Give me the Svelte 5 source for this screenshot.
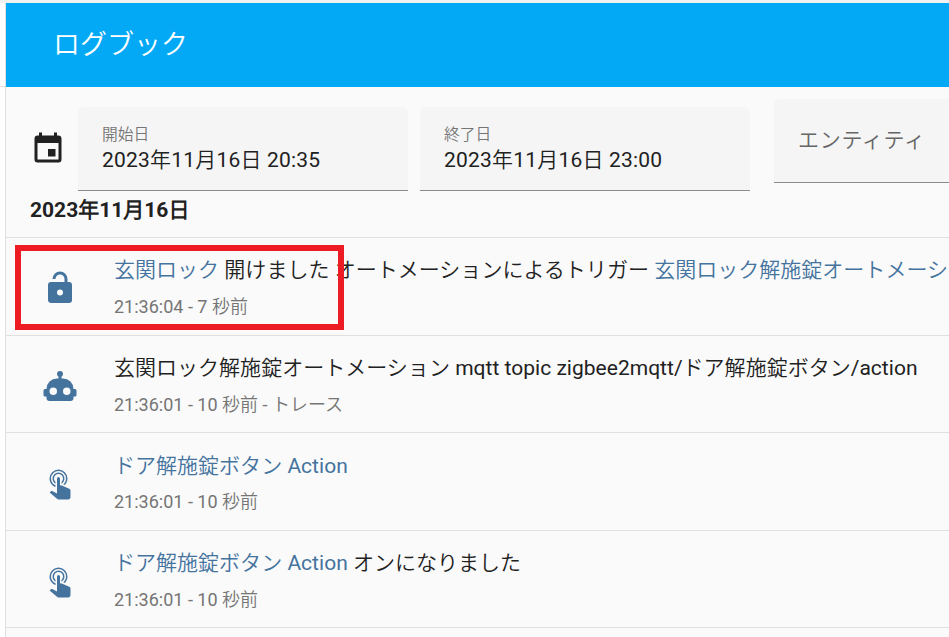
<script>
  const icons = {
    calendar: 'M19,19H5V8H19M16,1V3H8V1H6V3H5C3.89,3 3,3.89 3,5V19A2,2 0 0,0 5,21H19A2,2 0 0,0 21,19V5C21,3.89 20.1,3 19,3H18V1M17,12H12V17H17V12Z',
    lock: 'M18,8A2,2 0 0,1 20,10V20A2,2 0 0,1 18,22H6C4.89,22 4,21.1 4,20V10A2,2 0 0,1 6,8H15V6A3,3 0 0,0 12,3A3,3 0 0,0 9,6H7A5,5 0 0,1 12,1A5,5 0 0,1 17,6V8H18M12,17A2,2 0 0,0 14,15A2,2 0 0,0 12,13A2,2 0 0,0 10,15A2,2 0 0,0 12,17Z',
    robot: 'M12,2A2,2 0 0,1 14,4C14,4.74 13.6,5.39 13,5.73V7H14A7,7 0 0,1 21,14H22A1,1 0 0,1 23,15V18A1,1 0 0,1 22,19H21V20A2,2 0 0,1 19,22H5A2,2 0 0,1 3,20V19H2A1,1 0 0,1 1,18V15A1,1 0 0,1 2,14H3A7,7 0 0,1 10,7H11V5.73C10.4,5.39 10,4.74 10,4A2,2 0 0,1 12,2M7.5,13A2.5,2.5 0 0,0 5,15.5A2.5,2.5 0 0,0 7.5,18A2.5,2.5 0 0,0 10,15.5A2.5,2.5 0 0,0 7.5,13M16.5,13A2.5,2.5 0 0,0 14,15.5A2.5,2.5 0 0,0 16.5,18A2.5,2.5 0 0,0 19,15.5A2.5,2.5 0 0,0 16.5,13Z',
    tap: 'M10,9A1,1 0 0,1 11,8A1,1 0 0,1 12,9V13.47L13.21,13.6L18.15,15.79C18.68,16.03 19,16.56 19,17.14V21.5C18.97,22.32 18.32,22.97 17.5,23H11C10.62,23 10.26,22.85 10,22.57L5.1,18.37L5.84,17.6C6.03,17.39 6.3,17.28 6.58,17.28H6.8L10,19V9M11,5A4,4 0 0,1 15,9C15,10.5 14.2,11.77 13,12.46V11.24C13.61,10.69 14,9.89 14,9A3,3 0 0,0 11,6A3,3 0 0,0 8,9C8,9.89 8.39,10.69 9,11.24V12.46C7.8,11.77 7,10.5 7,9A4,4 0 0,1 11,5M11,3A6,6 0 0,1 17,9C17,10.7 16.29,12.23 15.16,13.33L14.16,12.88C15.28,11.96 16,10.56 16,9A5,5 0 0,0 11,4A5,5 0 0,0 6,9C6,11.05 7.23,12.81 9,13.58V14.66C6.67,13.83 5,11.61 5,9A6,6 0 0,1 11,3Z',
  };

  const dates = [
    { label: '開始日', value: '2023年11月16日 20:35' },
    { label: '終了日', value: '2023年11月16日 23:00' },
  ];

  const entries = [
    {
      icon: 'lock',
      parts: [
        { text: '玄関ロック', link: true },
        { text: ' 開けました オートメーションによるトリガー ' },
        { text: '玄関ロック解施錠オートメーシ', link: true },
      ],
      meta: '21:36:04 - 7 秒前',
      marked: true,
    },
    {
      icon: 'robot',
      parts: [{ text: '玄関ロック解施錠オートメーション mqtt topic zigbee2mqtt/ドア解施錠ボタン/action' }],
      meta: '21:36:01 - 10 秒前 - トレース',
    },
    {
      icon: 'tap',
      parts: [{ text: 'ドア解施錠ボタン Action', link: true }],
      meta: '21:36:01 - 10 秒前',
    },
    {
      icon: 'tap',
      parts: [{ text: 'ドア解施錠ボタン Action', link: true }, { text: ' オンになりました' }],
      meta: '21:36:01 - 10 秒前',
    },
  ];
</script>

<div class="page">
  <div class="sidebar"><div class="side-head"></div></div>
  <main>
    <header>ログブック</header>

    <div class="filters">
      <svg class="calendar" viewBox="0 0 24 24"><path d={icons.calendar} /></svg>
      {#each dates as d}
        <div class="field date">
          <span class="label">{d.label}</span>
          <span class="value">{d.value}</span>
        </div>
      {/each}
      <div class="field entity">エンティティ</div>
    </div>

    <h4>2023年11月16日</h4>

    {#each entries as entry}
      <div class="entry">
        <svg class="icon" viewBox="0 0 24 24"><path d={icons[entry.icon]} /></svg>
        <div class="body">
          <div class="message">{#each entry.parts as p}<span class:link={p.link}>{p.text}</span>{/each}</div>
          <div class="meta">{entry.meta}</div>
        </div>
        {#if entry.marked}<div class="marker"></div>{/if}
      </div>
    {/each}
    <div class="entry"></div>
  </main>
</div>

<style>
  :global(body) {
    margin: 0;
    background: #fff;
  }
  .page {
    display: flex;
    width: 949px;
    height: 637px;
    overflow: hidden;
    box-sizing: border-box;
    border-top: 3px solid #f1f1f1;
    font-family: Roboto, 'Noto Sans CJK JP DemiLight', 'Noto Sans CJK JP Light', 'Noto Sans CJK JP', sans-serif;
    color: #212121;
  }
  .sidebar {
    width: 5px;
    flex: none;
    border-right: 1px solid #e0e0e0;
  }
  .side-head {
    height: 83px;
    border-bottom: 1px solid #e0e0e0;
  }
  main {
    flex: 1;
    min-width: 0;
    background: #fafafa;
  }
  header {
    height: 84px;
    box-sizing: border-box;
    padding-left: 47px;
    background: #03a9f4;
    color: #fff;
    font-size: 27px;
    line-height: 85px;
  }
  .filters {
    display: flex;
    align-items: flex-start;
    height: 104px;
    padding-left: 24px;
  }
  .calendar {
    width: 36px;
    height: 36px;
    flex: none;
    margin: 43.5px 12px 0 0;
    fill: #212121;
  }
  .field {
    flex: none;
    box-sizing: border-box;
    width: 330px;
    height: 84px;
    padding-left: 24px;
    border-radius: 6px 6px 0 0;
    border-bottom: 1px solid #8c8c8c;
    background: #f5f5f5;
  }
  .date {
    display: flex;
    flex-direction: column;
    margin: 20px 12px 0 0;
    padding-top: 17px;
  }
  .label {
    font-size: 15.75px;
    line-height: 22px;
    color: #757575;
  }
  .value {
    font-size: 21px;
    line-height: 28px;
    letter-spacing: 0.2px;
    white-space: nowrap;
  }
  .entity {
    margin: 12px 0 0 12px;
    padding-left: 24px;
    font-size: 21px;
    line-height: 82px;
    letter-spacing: 0.7px;
    color: #666;
  }
  h4 {
    margin: 0;
    height: 46px;
    padding-left: 24px;
    font-size: 21px;
    font-weight: 700;
    line-height: 38px;
  }
  .entry {
    position: relative;
    display: flex;
    box-sizing: border-box;
    height: 97.6px;
    padding-left: 36px;
    border-top: 1px solid #e0e0e0;
  }
  .icon {
    width: 36px;
    height: 36px;
    flex: none;
    margin: 32px 36px 0 0;
    fill: #44739e;
  }
  .body {
    padding-top: 17.4px;
  }
  .message {
    white-space: pre;
    font-size: 21px;
    line-height: 30px;
    letter-spacing: 0.02px;
  }
  .link {
    color: #44739e;
  }
  .meta {
    margin-top: 7.6px;
    font-size: 18px;
    line-height: 28px;
    color: #757575;
  }
  .marker {
    position: absolute;
    left: 9px;
    top: 7px;
    width: 317px;
    height: 73px;
    border: 6px solid #ed1c24;
  }
</style>
